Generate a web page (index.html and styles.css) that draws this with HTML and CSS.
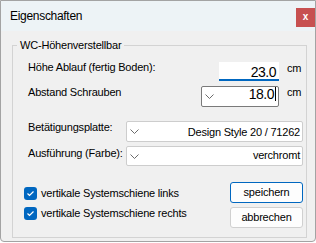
FILE: index.html
```html
<!DOCTYPE html>
<html lang="de">
<head>
    <meta charset="UTF-8">
    <title>Eigenschaften</title>
    <link rel="stylesheet" href="styles.css">
</head>
<body>
    <div class="window">
        <div class="titlebar">
            <span class="title">Eigenschaften</span>
            <div class="close">x</div>
        </div>
        <div class="content">
            <fieldset class="group">
                <legend class="group-title">WC-Höhenverstellbar</legend>
                <div class="group-body">
                    <div class="row row-1">
                        <span class="label">Höhe Ablauf (fertig Boden):</span>
                        <div class="num-input">23.0</div>
                        <span class="unit unit-1">cm</span>
                    </div>
                    <div class="row row-2">
                        <span class="label">Abstand Schrauben</span>
                        <div class="combo combo-small focused">
                            <svg class="chevron" width="9" height="5" viewBox="0 0 9 5"><polyline points="0.5,0.5 4.5,4.5 8.5,0.5" fill="none" stroke="#6b6b6b" stroke-width="1"/></svg>
                            <span class="value big">18.0</span>
                            <span class="caret"></span>
                        </div>
                        <span class="unit">cm</span>
                    </div>
                    <div class="row row-3">
                        <span class="label">Betätigungsplatte:</span>
                        <div class="combo combo-wide combo-3">
                            <svg class="chevron" width="9" height="5" viewBox="0 0 9 5"><polyline points="0.5,0.5 4.5,4.5 8.5,0.5" fill="none" stroke="#6b6b6b" stroke-width="1"/></svg>
                            <span class="value">Design Style 20 / 71262</span>
                        </div>
                    </div>
                    <div class="row row-4">
                        <span class="label">Ausführung (Farbe):</span>
                        <div class="combo combo-wide combo-4">
                            <svg class="chevron" width="9" height="5" viewBox="0 0 9 5"><polyline points="0.5,0.5 4.5,4.5 8.5,0.5" fill="none" stroke="#6b6b6b" stroke-width="1"/></svg>
                            <span class="value">verchromt</span>
                        </div>
                    </div>
                    <div class="options">
                        <div class="checks">
                            <div class="check">
                                <span class="box"><svg width="13" height="13" viewBox="0 0 13 13"><polyline points="3.5,6.5 5.5,8.5 9.5,4.5" fill="none" stroke="#fff" stroke-width="1.2"/></svg></span>
                                <span>vertikale Systemschiene links</span>
                            </div>
                            <div class="check">
                                <span class="box"><svg width="13" height="13" viewBox="0 0 13 13"><polyline points="3.5,6.5 5.5,8.5 9.5,4.5" fill="none" stroke="#fff" stroke-width="1.2"/></svg></span>
                                <span>vertikale Systemschiene rechts</span>
                            </div>
                        </div>
                        <div class="buttons">
                            <div class="button primary">speichern</div>
                            <div class="button">abbrechen</div>
                        </div>
                    </div>
                </div>
            </fieldset>
        </div>
    </div>
</body>
</html>
```

FILE: styles.css
```css
* {
    margin: 0;
    padding: 0;
    box-sizing: border-box;
}

body {
    font-family: "Liberation Sans", Arial, sans-serif;
    font-size: 11px;
    letter-spacing: -0.2px;
    color: #000;
    background: #fff;
}

.window {
    width: 316px;
    height: 242px;
    border: 1px solid #a3a3a3;
    border-radius: 0 0 4px 4px;
    background: #f0f0f0;
    overflow: hidden;
}

.titlebar {
    height: 30px;
    display: flex;
    align-items: flex-start;
    padding-left: 9px;
    background: #edf3f6;
}

.title {
    font-size: 12px;
    line-height: 14px;
    letter-spacing: -0.3px;
    margin-top: 8px;
}

.close {
    margin-left: auto;
    margin-top: 7px;
    width: 19px;
    height: 19px;
    background: #c75050;
    color: #fff;
    font-weight: bold;
    font-size: 10px;
    line-height: 17px;
    text-align: center;
}

.content {
    padding: 7px 8px 0 11px;
}

.group {
    border: 1px solid #d3d3d3;
    padding: 0 0 9px 0;
    min-width: 0;
}

.group-title {
    margin-left: 4px;
    padding: 0 3px;
    line-height: 14px;
}

.group-body {
    padding: 8px 0 0 15px;
}

.row {
    display: flex;
    align-items: flex-start;
}

.label {
    line-height: 14px;
}

.row-1 { height: 25px; }
.row-2 { height: 35px; }
.row-3 { height: 26px; }
.row-4 { height: 20px; }

.num-input {
    margin-left: auto;
    margin-top: 2px;
    width: 60px;
    height: 19px;
    padding: 3px 3px 0 0;
    background: #fff;
    border-bottom: 2px solid #0067c0;
    text-align: right;
    font-size: 14px;
    line-height: 14px;
    letter-spacing: -0.5px;
}

.unit {
    width: 19px;
    margin-left: 8px;
    line-height: 14px;
}

.unit-1 {
    margin-top: 1px;
}

.combo {
    display: flex;
    align-items: center;
    margin-left: auto;
    margin-top: 1px;
    background: #fff;
    border: 1px solid #cdcdcd;
    border-radius: 2px;
    padding: 0 2px 0 2px;
}

.combo.focused {
    border-color: #7a7a7a;
}

.combo-small {
    width: 78px;
    height: 21px;
}

.combo-wide {
    width: 177px;
    margin-right: 3px;
}

.combo-3 {
    height: 21px;
}

.combo-4 {
    height: 20px;
    margin-top: 0;
}

.chevron {
    flex: none;
    margin-left: 1px;
}

.value {
    margin-left: auto;
    line-height: 14px;
}

.combo-4 .value {
    margin-top: -3px;
}

.value.big {
    align-self: flex-start;
    font-size: 14px;
    letter-spacing: -0.5px;
    margin-top: 0;
}

.caret {
    align-self: flex-start;
    width: 1px;
    height: 14px;
    margin-left: 1px;
    background: #000;
}

.options {
    display: flex;
    margin-top: 16px;
}

.checks {
    margin-left: -4px;
    padding-top: 1px;
}

.check {
    display: flex;
    align-items: center;
    gap: 4px;
    height: 20px;
    line-height: 14px;
}

.box {
    width: 13px;
    height: 13px;
    border-radius: 3px;
    background: #0067c0;
    display: flex;
}

.buttons {
    margin-left: auto;
    margin-right: 3px;
    display: flex;
    flex-direction: column;
    gap: 4px;
}

.button {
    width: 73px;
    height: 21px;
    border: 1px solid #d0d0d0;
    border-radius: 3px;
    background: #fdfdfd;
    text-align: center;
    line-height: 19px;
}

.button.primary {
    border-color: #0067c0;
}
```
